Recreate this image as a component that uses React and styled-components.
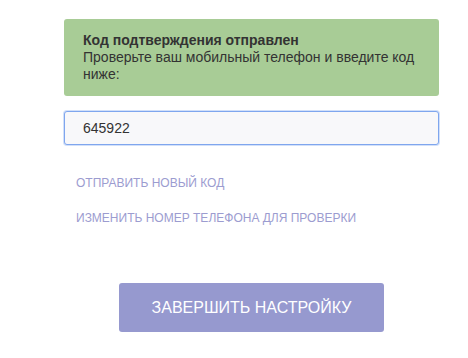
import React from 'react';
import styled, { createGlobalStyle } from 'styled-components';

const GlobalStyle = createGlobalStyle`
  body {
    margin: 0;
    background: #fff;
    font-family: "Liberation Sans", Arial, sans-serif;
  }
`;

const Page = styled.div`
  width: 375px;
  padding: 19px 0 0 64px;
  display: flex;
  flex-direction: column;
`;

const Notice = styled.div`
  background: #a8cc96;
  border-radius: 3px;
  padding: 13px 19px;
  color: #333;
  font-size: 14px;
  line-height: 17px;
`;

const NoticeTitle = styled.div`
  font-weight: bold;
`;

const CodeInput = styled.input`
  margin-top: 15px;
  height: 34px;
  box-sizing: border-box;
  border: 1px solid #7fa6ee;
  box-shadow: 0 0 0 1px rgba(127, 166, 238, 0.35);
  border-radius: 3px;
  background: #f8f8fa;
  padding: 0 18px;
  font-family: inherit;
  font-size: 14px;
  color: #333;
  outline: none;
`;

const Links = styled.div`
  display: flex;
  flex-direction: column;
  gap: 21px;
  padding: 31px 0 0 12px;
`;

const TextLink = styled.a`
  color: #9c9cd0;
  font-size: 12px;
  line-height: 14px;
  text-transform: uppercase;
  text-decoration: none;
  cursor: pointer;
`;

const Footer = styled.div`
  display: flex;
  justify-content: center;
  padding-top: 58px;
`;

const FinishButton = styled.button`
  width: 265px;
  height: 49px;
  border: none;
  border-radius: 3px;
  background: #9699cf;
  color: #fff;
  font-family: inherit;
  font-size: 16px;
  text-transform: uppercase;
  cursor: pointer;
`;

export default function App() {
  return (
    <>
      <GlobalStyle />
      <Page>
        <Notice>
          <NoticeTitle>Код подтверждения отправлен</NoticeTitle>
          Проверьте ваш мобильный телефон и введите код ниже:
        </Notice>
        <CodeInput defaultValue="645922" />
        <Links>
          <TextLink>Отправить новый код</TextLink>
          <TextLink>Изменить номер телефона для проверки</TextLink>
        </Links>
        <Footer>
          <FinishButton>Завершить настройку</FinishButton>
        </Footer>
      </Page>
    </>
  );
}
